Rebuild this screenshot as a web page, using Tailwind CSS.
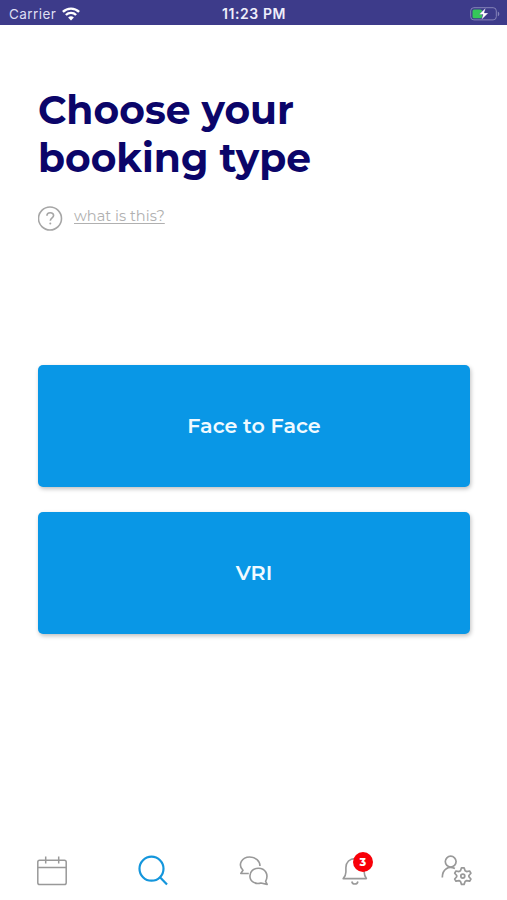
<!DOCTYPE html>
<html lang="en">
<head>
  <meta charset="UTF-8">
  <meta name="viewport" content="width=device-width, initial-scale=1.0">
  <title>Booking type</title>
  <script src="https://cdn.jsdelivr.net/npm/@tailwindcss/browser@4"></script>
</head>
<body class="bg-white font-['Montserrat',Inter,sans-serif]">
  <div class="flex h-[900px] w-[507px] flex-col overflow-hidden">

    <!-- Status bar -->
    <header class="grid h-[25px] shrink-0 grid-cols-3 items-center bg-[#3d3b8a] pt-[2px] pl-[9px] pr-[7px] font-[Inter,sans-serif] text-white">
      <div class="flex items-center gap-[6px]">
        <span class="text-[13.5px] leading-4 tracking-[0.45px] text-[#dedef2]">Carrier</span>
        <svg class="h-[14px] w-[18px]" viewBox="0 0 18 14" fill="none" stroke="currentColor" stroke-width="2.4">
          <path d="M0.9 4.9a11.6 11.6 0 0 1 16.2 0"/>
          <path d="M3.9 8a7.3 7.3 0 0 1 10.2 0"/>
          <path d="M9 13.6L6.1 10.6a4.2 4.2 0 0 1 5.8 0z" fill="currentColor" stroke="none"/>
        </svg>
      </div>
      <span class="-ml-px text-center text-[14px] leading-4 font-semibold tracking-[0.6px] whitespace-nowrap text-[#eeeefa]">11:23 PM</span>
      <svg class="h-[14px] w-[30px] justify-self-end" viewBox="0 0 30 14" fill="none">
        <rect x="0.7" y="0.7" width="25.6" height="12.2" rx="3.2" stroke="#8583b8"/>
        <path d="M27.8 4.4c2 .8 2 4 0 4.8z" fill="#8583b8"/>
        <rect x="2.5" y="2.4" width="9.5" height="8.8" rx="1.5" fill="#35c759"/>
        <path d="M15.600 1L9 7.500h4l-1.500 5.200 6.800-6.700H14.200z" fill="#fff" stroke="#3d3b8a" stroke-width="0.300"/>
      </svg>
    </header>

    <main class="flex-1 pt-[62px] pr-[37px] pl-[38px]">
      <h1 class="text-[39.2px] leading-[47.5px] font-bold text-[#0b0569]">
        <span class="block">Choose your</span>
        <span class="block">booking type</span>
      </h1>

      <a href="#" class="mt-[23px] flex h-[26px] items-start text-[#b0b0b0]">
        <svg class="h-[26px] w-[25px]" viewBox="0 0 25 26" fill="none" stroke="#a6a6a6" stroke-width="1.6">
          <circle cx="12" cy="13.5" r="11.5"/>
          <path d="M8.9 10.8c0-2 1.5-3 3.300-3s3.400 1 3.400 2.800c0 2.300-3.300 2.400-3.300 5.200"/>
          <circle cx="12.300" cy="18.500" r="1" fill="#a6a6a6" stroke="none"/>
        </svg>
        <span class="ml-[11px] pt-px text-[14.6px] leading-5 underline decoration-1 underline-offset-2">what is this?</span>
      </a>

      <!-- Booking options -->
      <div class="mt-[134px] flex flex-col gap-[25px]">
        <button class="h-[122px] rounded-[5px] bg-[#0997e6] text-[20.7px] font-semibold text-[#f0faff] shadow-[1px_2px_4px_rgba(0,0,0,0.25)]">Face to Face</button>
        <button class="h-[122px] rounded-[5px] bg-[#0997e6] text-[20.7px] font-semibold text-[#f0faff] shadow-[1px_2px_4px_rgba(0,0,0,0.25)]">VRI</button>
      </div>
    </main>

    <!-- Tab bar -->
    <nav class="grid h-[60px] shrink-0 grid-cols-5 justify-items-center pt-[10px] text-[#999999]">
      <svg class="size-10" viewBox="0 0 40 40" fill="none" stroke="currentColor" stroke-width="1.5">
        <rect x="6.8" y="10.3" width="28.4" height="24.2" rx="1.8"/>
        <path d="M6.8 17.5h28.400M14.700 6.500v7M27.700 6.500v7"/>
      </svg>
      <svg class="size-10" viewBox="0 0 40 40" fill="none" stroke="#1496dc" stroke-width="2.2">
        <circle cx="19.500" cy="18.700" r="12"/>
        <path d="M28 27.200l7 7.200"/>
      </svg>
      <svg class="size-10" viewBox="0 0 40 40" fill="none" stroke="currentColor" stroke-width="1.6" stroke-linejoin="round">
        <path d="M15.800 23.500H7.800l2.200-3.300C4.200 14.500 9.300 7 16.600 7c6 0 10.400 4 10.400 9"/>
        <path d="M32.600 31.400c3.500-6.800-.3-13.200-7.200-13.200-4.900 0-8.500 3.300-8.500 7.700 0 5.200 5.300 8.900 11 7.100l6.300 1.400z"/>
      </svg>
      <div class="relative size-10">
        <svg class="size-10" viewBox="0 0 40 40" fill="none" stroke="currentColor" stroke-width="1.6" stroke-linejoin="round">
          <path d="M8.200 28.600h23.200c-1.500-2-2.200-4-2.200-6.500v-4.500c0-5.500-4-9-9.200-9s-9.100 3.500-9.100 9v4.500c0 2.500-.9 4.700-2.700 6.500z"/>
          <path d="M16.800 31.500c.7 3.400 5.400 3.400 6.100 0"/>
        </svg>
        <span class="absolute top-[2px] left-[18px] flex size-5 items-center justify-center rounded-full bg-[#f80008] text-[11px] font-extrabold text-white">3</span>
      </div>
      <svg class="size-10" viewBox="0 0 40 40" fill="none" stroke="currentColor" stroke-width="1.700" stroke-linejoin="round">
        <circle cx="14.700" cy="11.600" r="5.400"/>
        <path d="M6.300 27.500c0-8.800 6.500-11.800 12.600-8.900"/>
        <path d="M24.500 20.700l1-2.900h2.600l1 2.900 1.500.9 3-.6 1.300 2.200-2 2.300v1.200l2 2.300-1.300 2.200-3-.6-1.500.9-1 2.900h-2.600l-1-2.900-1.500-.9-3 .6-1.300-2.200 2-2.300v-1.200l-2-2.300 1.300-2.200 3 .6z"/>
        <circle cx="26.800" cy="26.100" r="2"/>
      </svg>
    </nav>
  </div>
</body>
</html>
